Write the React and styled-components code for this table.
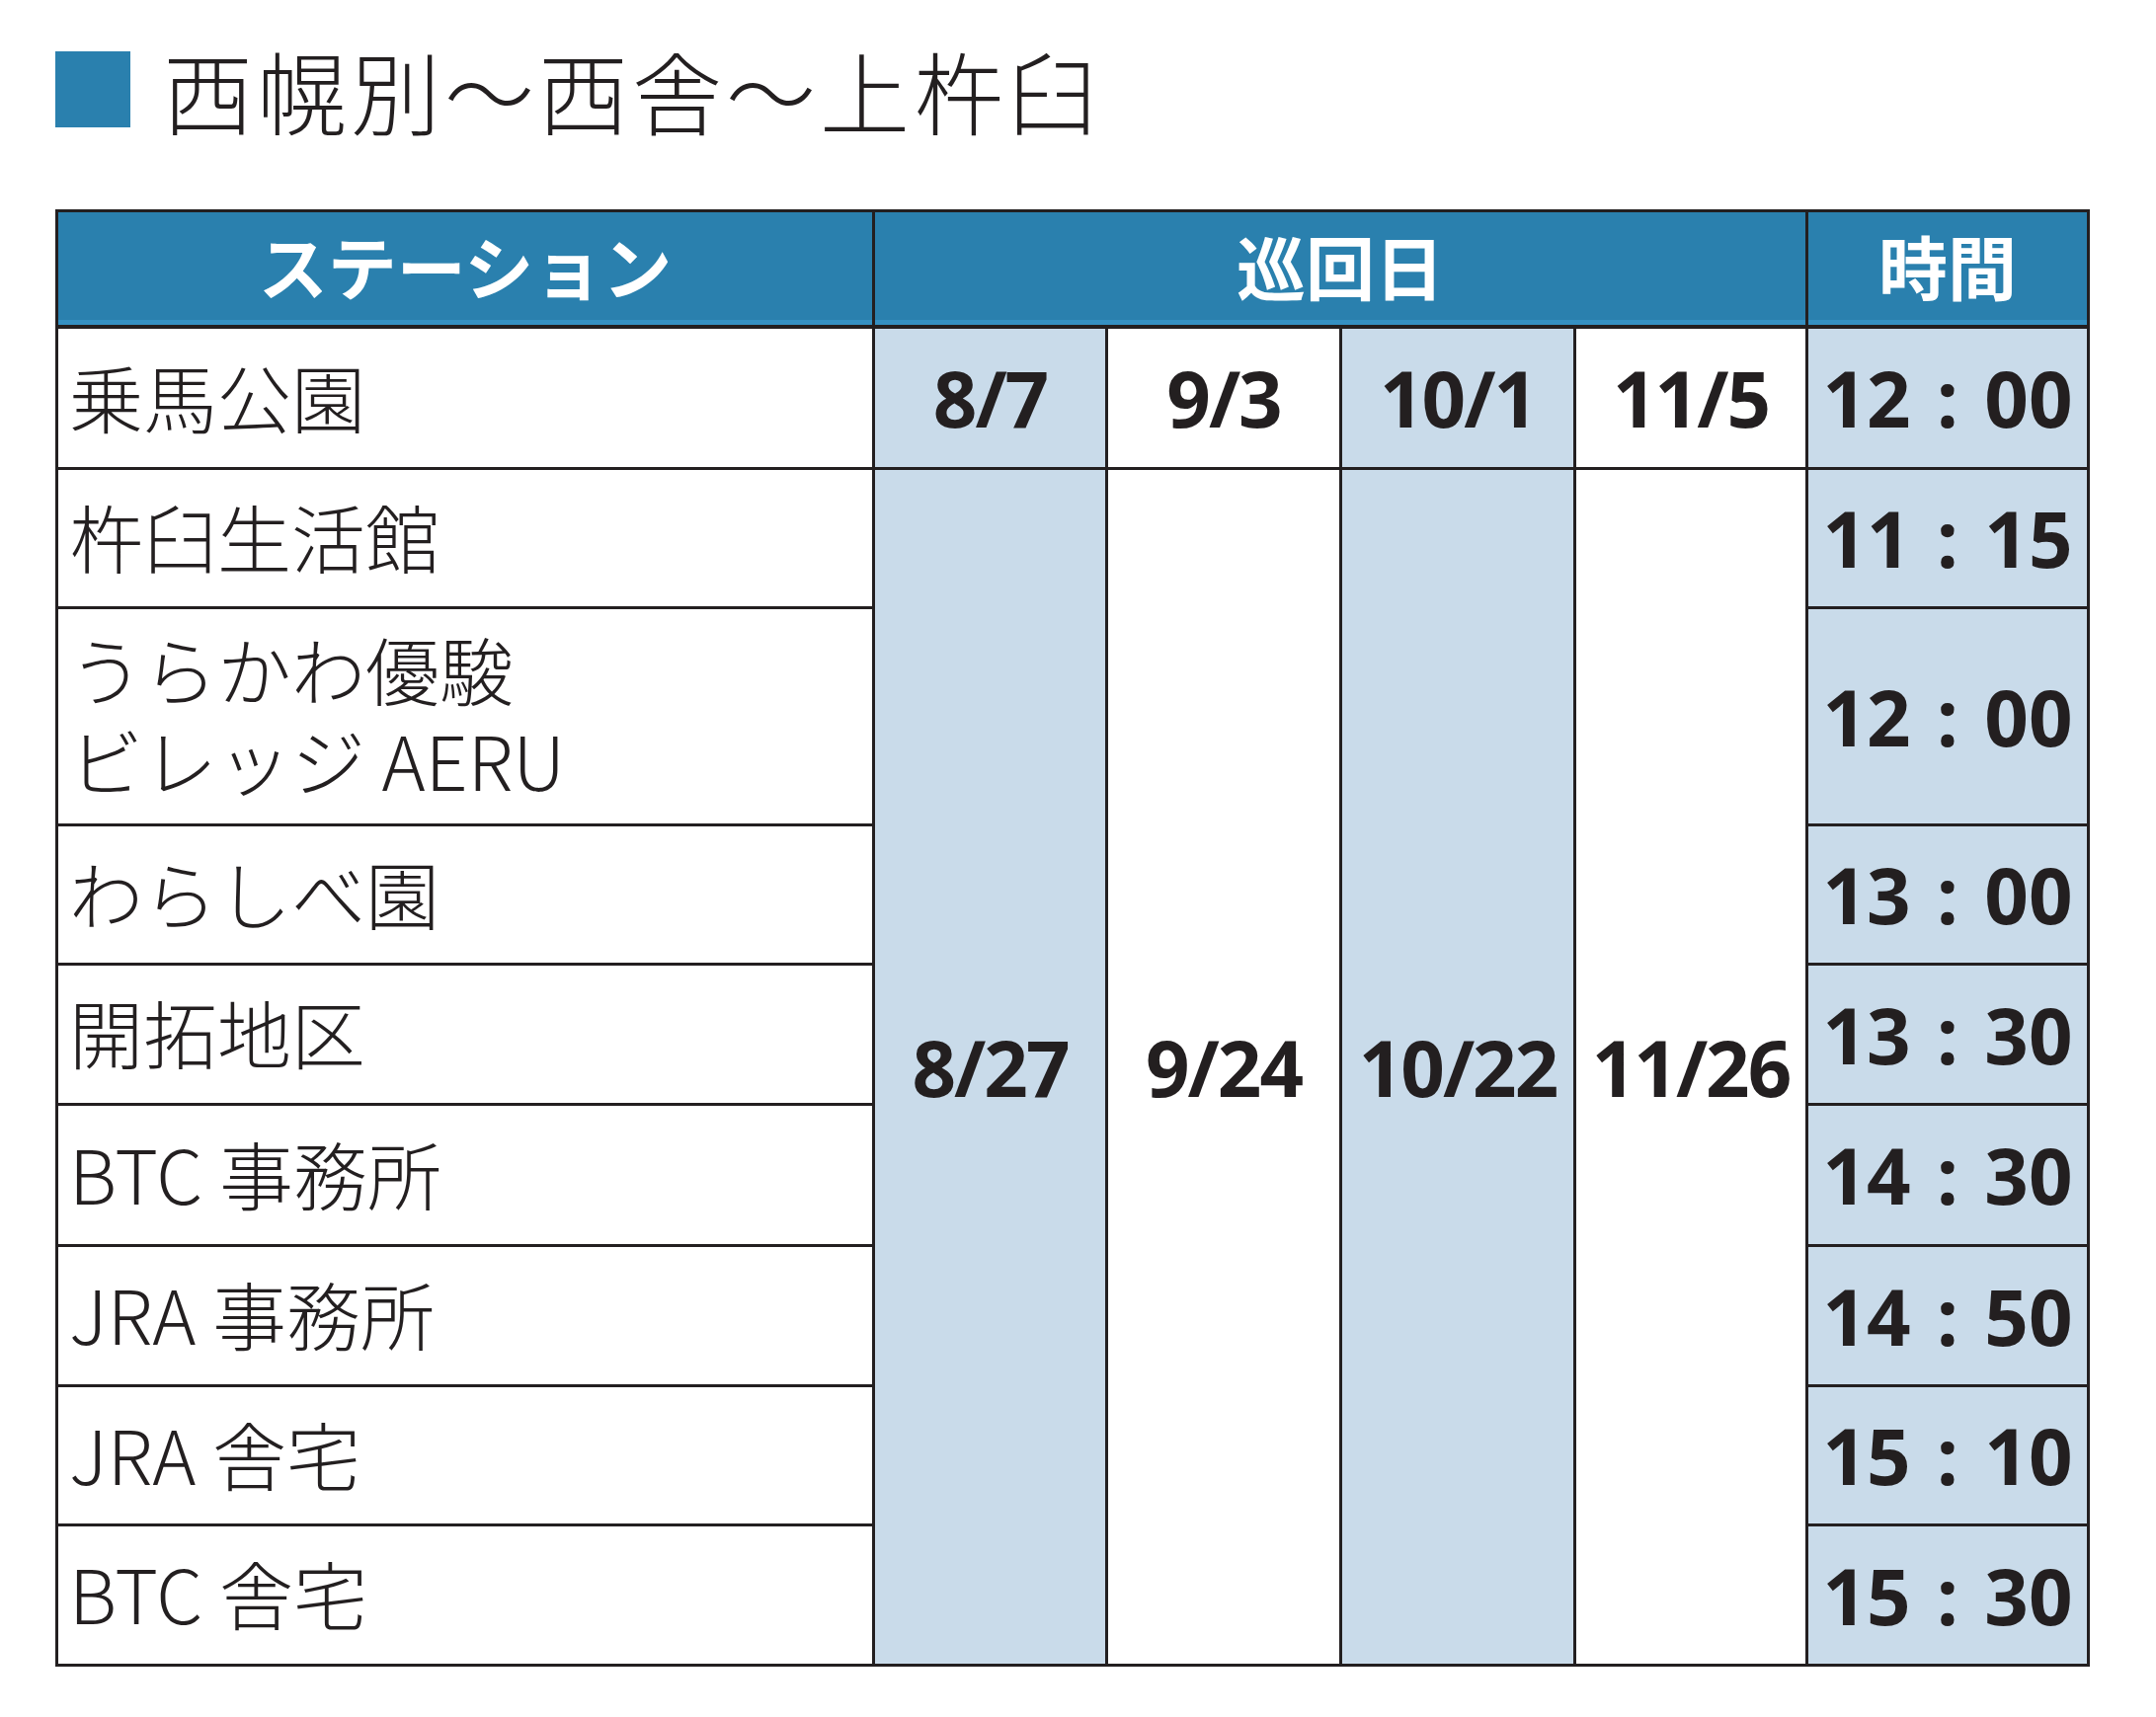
import React from "react";
import styled, { createGlobalStyle } from "styled-components";

const GlobalStyle = createGlobalStyle`
  html, body {
    margin: 0;
    padding: 0;
    background: #fff;
  }
  body {
    font-family: "Noto Sans CJK JP", "Noto Sans", sans-serif;
    color: #231f20;
  }
`;

const stations = [
  { name: "乗馬公園", time: "12 : 00" },
  { name: "杵臼生活館", time: "11 : 15" },
  { name: "うらかわ優駿\nビレッジ AERU", time: "12 : 00" },
  { name: "わらしべ園", time: "13 : 00" },
  { name: "開拓地区", time: "13 : 30" },
  { name: "BTC 事務所", time: "14 : 30" },
  { name: "JRA 事務所", time: "14 : 50" },
  { name: "JRA 舎宅", time: "15 : 10" },
  { name: "BTC 舎宅", time: "15 : 30" },
];

const firstDates = ["8/7", "9/3", "10/1", "11/5"];
const secondDates = ["8/27", "9/24", "10/22", "11/26"];

export default function App() {
  return (
    <>
      <GlobalStyle />
      <Page>
        <Title>
          <Mark />
          <h1>西幌別〜西舎〜上杵臼</h1>
        </Title>
        <Table>
          <Head>ステーション</Head>
          <Head $span={4}>巡回日</Head>
          <Head>時間</Head>

          {stations.map((s, i) => (
            <React.Fragment key={i}>
              <Station>
                <span>{s.name}</span>
              </Station>
              {i === 0 &&
                firstDates.map((d, j) => (
                  <DateCell key={d} $shade={j % 2 === 0}>
                    {d}
                  </DateCell>
                ))}
              {i === 1 &&
                secondDates.map((d, j) => (
                  <DateCell key={d} $shade={j % 2 === 0} $rows={8}>
                    {d}
                  </DateCell>
                ))}
              <TimeCell>{s.time}</TimeCell>
            </React.Fragment>
          ))}
        </Table>
      </Page>
    </>
  );
}

const Page = styled.div`
  padding: 51px 70px 54px 56px;
`;

const Title = styled.div`
  display: flex;
  align-items: center;
  gap: 33px;
  height: 78px;
  margin-bottom: 83px;
  h1 {
    margin: 0;
    font-family: "Noto Sans CJK JP", sans-serif;
    font-weight: 300;
    font-size: 91px;
    letter-spacing: 4px;
    line-height: 1;
    color: #231f20;
  }
`;

const Mark = styled.div`
  width: 76px;
  height: 77px;
  background: #2a80ae;
  flex-shrink: 0;
`;

const Table = styled.div`
  display: grid;
  grid-template-columns: 827px 236px 237px 237px 235px 285px;
  grid-template-rows: 118px 143px 141px 220px 141px 142px 143px 142px 141px 142px;
  width: 2060px;
  border-top: 3px solid #231f20;
  border-left: 3px solid #231f20;
  box-sizing: border-box;
`;

const Cell = styled.div`
  display: flex;
  align-items: center;
  border-right: 3px solid #231f20;
  border-bottom: 3px solid #231f20;
  box-sizing: border-box;
  min-width: 0;
`;

const Head = styled(Cell)`
  grid-column: span ${(p) => p.$span || 1};
  justify-content: center;
  background: #2a80ae;
  box-shadow: inset 0 -5px 0 #3590c2;
  border-bottom-width: 4px;
  color: #fff;
  font-family: "Noto Sans CJK JP", sans-serif;
  font-weight: 700;
  font-size: 70px;
  line-height: 1;
  padding-bottom: 6px;
`;

const Station = styled(Cell)`
  padding-left: 11px;
  padding-bottom: 5px;
  background: #fff;
  span {
    font-family: "Noto Sans CJK JP", sans-serif;
    font-weight: 300;
    font-size: 75px;
    line-height: 92px;
    white-space: pre;
    color: #231f20;
  }
`;

const DateCell = styled(Cell)`
  grid-row: span ${(p) => p.$rows || 1};
  justify-content: center;
  background: ${(p) => (p.$shade ? "#c9dbea" : "#fff")};
  font-family: "Open Sans", "Noto Sans", sans-serif;
  font-weight: 700;
  font-size: 78px;
  letter-spacing: -2px;
  color: #231f20;
`;

const TimeCell = styled(Cell)`
  grid-column: 6;
  justify-content: center;
  background: #c9dbea;
  font-family: "Open Sans", "Noto Sans", sans-serif;
  font-weight: 700;
  font-size: 78px;
  word-spacing: 6px;
  white-space: pre;
  color: #231f20;
`;
